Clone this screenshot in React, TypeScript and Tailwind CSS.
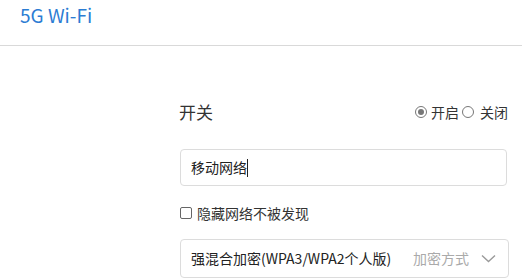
import React, { useState } from "react";

export default function App() {
  const [on, setOn] = useState(true);
  const [hidden, setHidden] = useState(false);

  return (
    <div
      className="w-[522px] h-[279px] bg-white overflow-hidden text-[#333]"
      style={{ fontFamily: '"Noto Sans CJK SC", "Noto Sans", sans-serif' }}
    >
      {/* Header */}
      <div className="pl-5 h-[46px] border-b border-[#d9d9d9] flex items-start">
        <h1 className="text-[19px] leading-[24px] pt-[3px] text-[#2b7cd3]">5G Wi-Fi</h1>
      </div>

      {/* Form */}
      <div className="ml-[179px] w-[330px] flex flex-col">
        <div className="mt-[54px] h-[24px] flex items-center justify-between">
          <span className="text-[17px] leading-[24px]">开关</span>
          <div className="flex items-center text-[14px] text-[#333] mr-[1px]">
            <button onClick={() => setOn(true)} className="flex items-center">
              <span className="w-[12px] h-[12px] rounded-full border border-[#777] flex items-center justify-center">
                {on && <span className="w-[6px] h-[6px] rounded-full bg-[#777]" />}
              </span>
              <span className="ml-[4px]">开启</span>
            </button>
            <button onClick={() => setOn(false)} className="flex items-center ml-[3px]">
              <span className="w-[12px] h-[12px] rounded-full border border-[#777] flex items-center justify-center">
                {!on && <span className="w-[6px] h-[6px] rounded-full bg-[#777]" />}
              </span>
              <span className="ml-[6px]">关闭</span>
            </button>
          </div>
        </div>

        <div className="mt-[25px] ml-[1px] w-[327px] h-[37px] rounded-[4px] border border-[#dcdcdc] flex items-center px-[10px]">
          <span className="text-[14px] text-[#222]">移动网络</span>
          <span className="w-px h-[18px] bg-[#222]" />
        </div>

        <button
          onClick={() => setHidden(!hidden)}
          className="mt-[17px] ml-[1px] flex items-center h-[20px]"
        >
          <span className="w-[12px] h-[12px] rounded-[2px] border border-[#666] flex items-center justify-center">
            {hidden && <span className="w-[6px] h-[6px] bg-[#666]" />}
          </span>
          <span className="ml-[5px] text-[14px] text-[#333]">隐藏网络不被发现</span>
        </button>

        <div className="mt-[16px] ml-[1px] w-[329px] h-[39px] rounded-[4px] border border-[#dcdcdc] flex items-center pl-[10px] pr-[12px]">
          <span className="text-[14px] text-[#222]">强混合加密(WPA3/WPA2个人版)</span>
          <span className="ml-auto text-[14px] text-[#aaa]">加密方式</span>
          <svg className="ml-[12px]" width="15" height="9" viewBox="0 0 15 9" fill="none">
            <path d="M1 1.5 L7.5 7.5 L14 1.5" stroke="#9a9a9a" strokeWidth="1.4" />
          </svg>
        </div>
      </div>
    </div>
  );
}
